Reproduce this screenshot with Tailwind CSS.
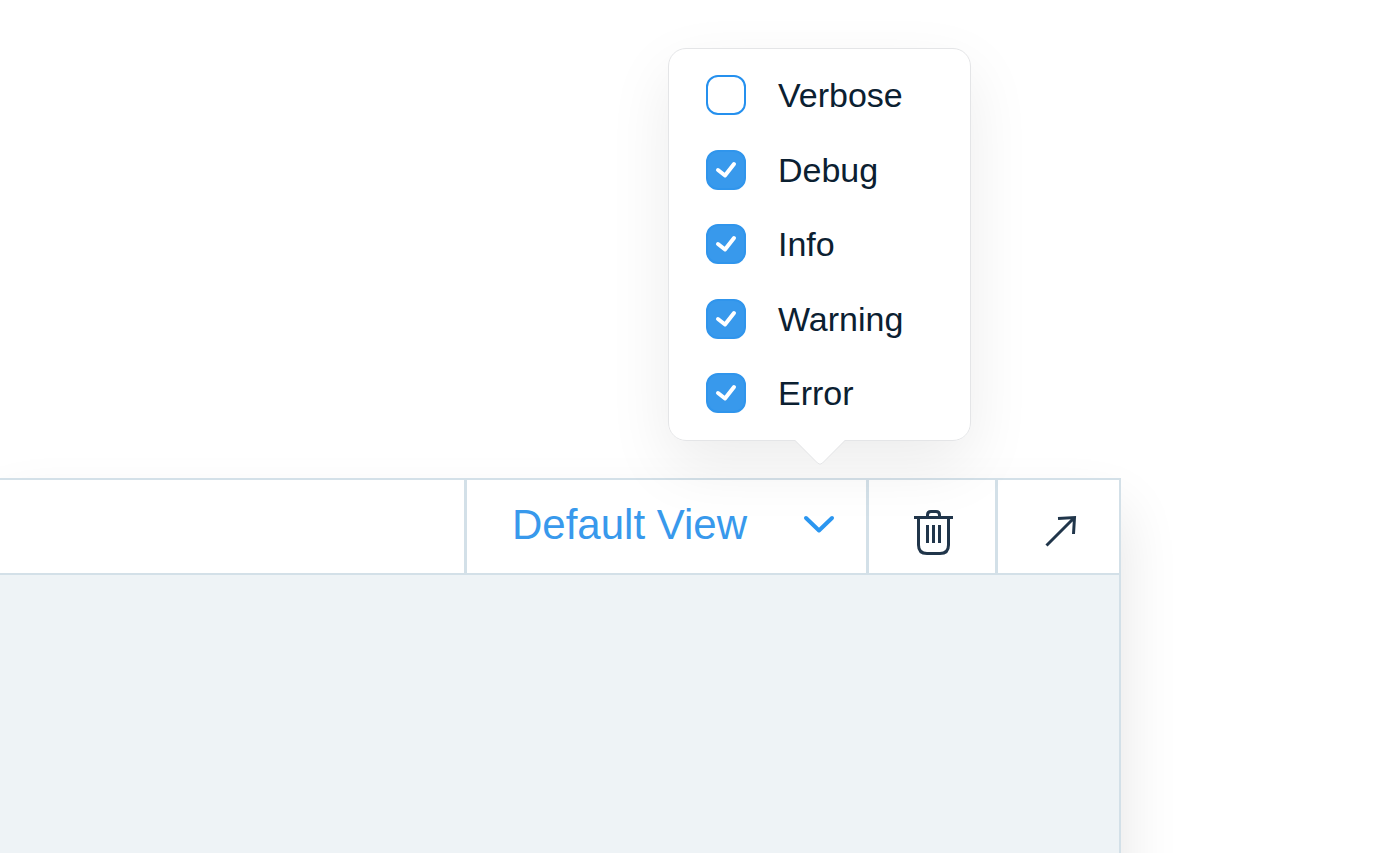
<!DOCTYPE html>
<html lang="en">
<head>
<meta charset="utf-8">
<meta name="viewport" content="width=device-width, initial-scale=1">
<title>Console log levels</title>
<script src="https://cdn.jsdelivr.net/npm/@tailwindcss/browser@4"></script>
</head>
<body class="bg-white font-['Liberation_Sans',Arial,sans-serif]">
<main class="flex h-screen flex-col overflow-hidden pt-[478px] pr-[279px]">
  <section class="-mb-16 flex flex-1 flex-col border-t-2 border-r-2 border-[#d3e0e8] bg-[#eef3f6] shadow-[0_32px_56px_rgba(0,0,0,0.11)]">
    <header class="flex h-[95px] border-b-2 border-[#d3e0e8] bg-white">
      <div class="flex-1"></div>
      <div class="relative w-[402px] border-l-3 border-[#d3e0e8]">
        <button type="button" aria-expanded="true" aria-controls="levels" class="flex h-full w-full items-center justify-between pr-[31px] pb-[3px] pl-[45px] text-[42px] leading-[48px] text-[#3899ec]">
          <span>Default View</span>
          <svg class="h-5 w-8" viewBox="0 0 32 20" fill="none" stroke="#2b96f0" stroke-width="4" stroke-linecap="round" stroke-linejoin="round" aria-hidden="true"><path d="M3 3L16 15.500L29 3"/></svg>
        </button>
        <fieldset id="levels" class="absolute bottom-full left-[201px] mb-[39px] flex h-[393px] w-[303px] flex-col justify-between rounded-[18px] border border-[#e4e5e7] bg-white pt-[26px] pb-[27px] pl-[37px] text-[34px] leading-10 text-[#0b2031] shadow-[0_24px_64px_rgba(0,0,0,0.08)]">
          <label class="flex items-center gap-8"><span class="relative flex h-10 w-10"><input type="checkbox" class="peer h-10 w-10 appearance-none rounded-[12px] border-2 border-[#2590ee] bg-white checked:border-[#3095ec] checked:bg-[#3899ec]"><svg class="pointer-events-none absolute inset-0 hidden h-10 w-10 peer-checked:block" viewBox="0 0 40 40" fill="none" stroke="white" stroke-width="4" stroke-linecap="round" stroke-linejoin="round"><path d="M12 20L19 25.500L28 14"/></svg></span>Verbose</label>
          <label class="flex items-center gap-8"><span class="relative flex h-10 w-10"><input type="checkbox" checked class="peer h-10 w-10 appearance-none rounded-[12px] border-2 border-[#2590ee] bg-white checked:border-[#3095ec] checked:bg-[#3899ec]"><svg class="pointer-events-none absolute inset-0 hidden h-10 w-10 peer-checked:block" viewBox="0 0 40 40" fill="none" stroke="white" stroke-width="4" stroke-linecap="round" stroke-linejoin="round"><path d="M12 20L19 25.500L28 14"/></svg></span>Debug</label>
          <label class="flex items-center gap-8"><span class="relative flex h-10 w-10"><input type="checkbox" checked class="peer h-10 w-10 appearance-none rounded-[12px] border-2 border-[#2590ee] bg-white checked:border-[#3095ec] checked:bg-[#3899ec]"><svg class="pointer-events-none absolute inset-0 hidden h-10 w-10 peer-checked:block" viewBox="0 0 40 40" fill="none" stroke="white" stroke-width="4" stroke-linecap="round" stroke-linejoin="round"><path d="M12 20L19 25.500L28 14"/></svg></span>Info</label>
          <label class="flex items-center gap-8"><span class="relative flex h-10 w-10"><input type="checkbox" checked class="peer h-10 w-10 appearance-none rounded-[12px] border-2 border-[#2590ee] bg-white checked:border-[#3095ec] checked:bg-[#3899ec]"><svg class="pointer-events-none absolute inset-0 hidden h-10 w-10 peer-checked:block" viewBox="0 0 40 40" fill="none" stroke="white" stroke-width="4" stroke-linecap="round" stroke-linejoin="round"><path d="M12 20L19 25.500L28 14"/></svg></span>Warning</label>
          <label class="flex items-center gap-8"><span class="relative flex h-10 w-10"><input type="checkbox" checked class="peer h-10 w-10 appearance-none rounded-[12px] border-2 border-[#2590ee] bg-white checked:border-[#3095ec] checked:bg-[#3899ec]"><svg class="pointer-events-none absolute inset-0 hidden h-10 w-10 peer-checked:block" viewBox="0 0 40 40" fill="none" stroke="white" stroke-width="4" stroke-linecap="round" stroke-linejoin="round"><path d="M12 20L19 25.500L28 14"/></svg></span>Error</label>
          <svg class="absolute top-full left-[125px] -mt-px h-[27px] w-[52px]" viewBox="0 0 52 27" aria-hidden="true"><path d="M1 0L1 1L23.500 24Q26 26.500 28.500 24L51 1L51 0Z" fill="white"/><path d="M1 1.500L23.500 24Q26 26.500 28.500 24L51 1.500" fill="none" stroke="#e4e5e7"/></svg>
        </fieldset>
      </div>
      <button type="button" aria-label="Clear log" class="flex w-[129px] items-center justify-center border-l-3 border-[#d3e0e8] pt-[13px] pl-[3px]">
        <svg class="h-[46px] w-[39px]" viewBox="0 0 39 46" fill="none" stroke="#20354a" stroke-width="3" aria-hidden="true"><path d="M0 7.500H39M13.500 7V5Q13.500 1.500 17 1.500H22Q25.500 1.500 25.500 5V7M4.500 8V35Q4.500 43.500 13 43.500H26Q34.500 43.500 34.500 35V8M13.500 15V33M19.500 15V33M25.500 15V33"/></svg>
      </button>
      <button type="button" aria-label="Open in new window" class="flex w-[124px] items-center justify-center border-l-3 border-[#d3e0e8] pt-2 pl-1">
        <svg class="h-8 w-8" viewBox="0 0 32 32" fill="none" stroke="#20354a" stroke-width="3" aria-hidden="true"><path d="M1.500 30.500L29.500 2.500M13 3.500L29.500 2.500L28.500 19"/></svg>
      </button>
    </header>
  </section>
</main>
</body>
</html>
